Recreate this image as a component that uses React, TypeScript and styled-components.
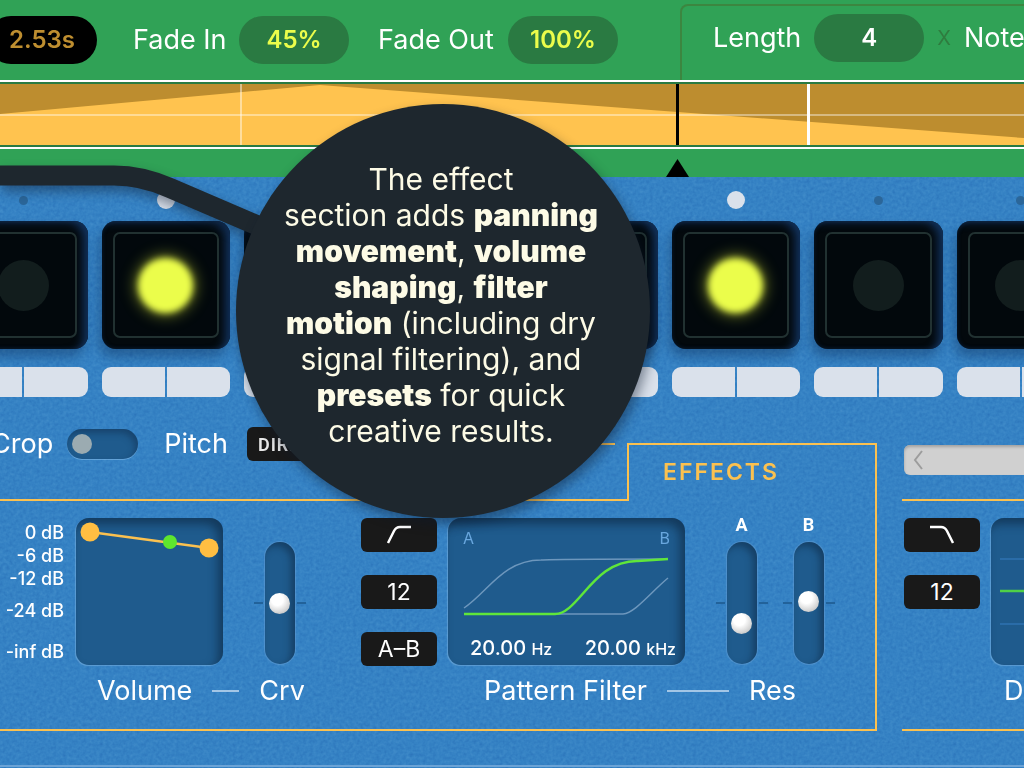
import React from "react";
import styled, { createGlobalStyle, css } from "styled-components";

const color = {
  blue: "#3582c4",
  well: "#1f5b8d",
  green: "#30a256",
  greenDark: "#2a7a42",
  gold: "#ffc34f",
  goldDark: "#bd8d2f",
  line: "#fbc150",
  ink: "#1e272e",
  cream: "#fdfbe6",
  key: "#dae1eb",
  lime: "#ebfd4b",
  black: "#191919",
};

const GlobalStyle = createGlobalStyle`
  *, *::before, *::after { box-sizing: border-box; }
  html, body { margin: 0; padding: 0; }
  body {
    background: ${color.blue};
    color: #fff;
    font-family: Inter, "Liberation Sans", sans-serif;
    overflow: hidden;
  }
  button, input { font: inherit; color: inherit; border: 0; padding: 0; margin: 0; }
`;

const Page = styled.main`
  position: relative;
  display: flex;
  flex-direction: column;
  min-height: 100vh;
  overflow: hidden;
`;

/* ---------- header ---------- */

const Header = styled.header`
  display: flex;
  background: ${color.green};
  padding-top: 4px;
`;

const FadeBar = styled.div`
  display: flex;
  align-items: center;
  flex: none;
  width: 680px;
  height: 76px;
  padding-bottom: 4px;
  margin-left: -13px;
  margin-right: 13px;
`;

const LengthBox = styled.div`
  display: flex;
  align-items: center;
  flex: 1;
  min-width: 0;
  height: 76px;
  gap: 13px;
  margin-right: -20px;
  padding: 0 0 10px 31px;
  border: 2px solid #3c8640;
  border-bottom: 0;
  border-radius: 8px 0 0 0;
`;

const Field = styled.div<{ $width: number; $before: number }>`
  display: flex;
  align-items: center;
  justify-content: space-between;
  flex: none;
  width: ${(p) => p.$width}px;
  margin-left: ${(p) => p.$before}px;
`;

const Caption = styled.label`
  font-size: 27px;
  line-height: 30px;
  white-space: nowrap;
`;

const Pill = styled.input<{ $tone: "lime" | "gold" | "white" }>`
  flex: none;
  width: 110px;
  height: 48px;
  padding-bottom: 1px;
  border-radius: 24px;
  text-align: center;
  font-size: 24px;
  font-weight: 600;
  outline: 0;
  background: ${color.greenDark};
  color: ${color.lime};
  ${(p) => p.$tone === "white" && css`color: #fff;`}
  ${(p) => p.$tone === "gold" && css`color: #be8e30; background: #000;`}
`;

const Times = styled.span`
  font-size: 20px;
  line-height: 24px;
  color: #2f7c3f;
`;

/* ---------- envelope timeline ---------- */

const Timeline = styled.section`
  background: ${color.green};
`;

const Envelope = styled.div`
  height: 69px;
  border: solid #fff;
  border-width: 2px 0;
  background: ${color.greenDark};
  padding: 2px 0;
  svg { display: block; width: 100%; height: 61px; }
`;

const MarkerStrip = styled.div`
  display: flex;
  align-items: flex-end;
  height: 28px;
  padding-left: 65%;
`;

const Marker = styled.svg`
  width: 24px;
  height: 18px;
`;

/* ---------- step sequencer ---------- */

const Deck = styled.div`
  position: relative;
  flex: 1;
  background: ${color.blue};
`;

const Grain = styled.svg`
  position: absolute;
  inset: 0;
  width: 100%;
  height: 100%;
  opacity: 0.3;
  mix-blend-mode: soft-light;
  pointer-events: none;
`;

const Steps = styled.section`
  display: grid;
  grid-template-columns: repeat(8, 1fr);
  gap: 14px;
  margin: 0 -61px 0 -41px;
  padding-top: 12px;
`;

const Step = styled.div`
  position: relative;
  display: flex;
  flex-direction: column;
`;

const DotRow = styled.div`
  display: flex;
  align-items: center;
  justify-content: center;
  height: 22px;
`;

const Dot = styled.span<{ $on: boolean }>`
  width: ${(p) => (p.$on ? 18 : 9)}px;
  height: ${(p) => (p.$on ? 18 : 9)}px;
  border-radius: 50%;
  background: ${(p) => (p.$on ? color.key : "#2b6699")};
`;

const Pad = styled.button`
  display: flex;
  height: 128px;
  margin-top: 10px;
  padding: 11px;
  border-radius: 14px;
  background: #03090d;
  box-shadow:
    inset -7px 3px 9px -2px #12315a,
    inset 0 0 4px #0a1c33,
    -3px 8px 12px rgba(10, 40, 80, 0.4);
`;

const PadFace = styled.span`
  display: flex;
  flex: 1;
  align-items: center;
  justify-content: center;
  border: 2px solid #213131;
  border-radius: 7px;
  background: #02080c;
`;

const Lamp = styled.span<{ $on: boolean }>`
  width: 51px;
  height: 51px;
  border-radius: 50%;
  background: #121d1d;
  ${(p) =>
    p.$on &&
    css`
      width: 55px;
      height: 55px;
      background: ${color.lime};
      filter: blur(3px);
      box-shadow: 0 0 14px 2px rgba(200, 215, 50, 0.6);
    `}
`;

const Keys = styled.div`
  display: grid;
  grid-template-columns: 1fr 1fr;
  gap: 2px;
  margin-top: 18px;
  border-radius: 9px;
  overflow: hidden;
`;

const Key = styled.button`
  height: 30px;
  background: ${color.key};
`;

/* ---------- lower panels ---------- */

const Panels = styled.div`
  position: relative;
  display: flex;
  gap: 25px;
  padding-top: 30px;
`;

const Effects = styled.section`
  flex: none;
  display: flex;
  flex-direction: column;
  width: 877px;
`;

const TabRow = styled.div`
  display: flex;
  margin-top: 16px;
  height: 58px;
`;

const Options = styled.div`
  flex: 1;
  display: flex;
  border-bottom: 2px solid ${color.line};
`;

const OptionGroup = styled.div`
  display: flex;
  align-items: center;
  height: 34px;
  margin-top: -16px;
  margin-left: -9px;
`;

const Toggle = styled.input`
  appearance: none;
  flex: none;
  width: 71px;
  height: 30px;
  padding: 5px;
  margin: 0 26px 0 14px;
  border-radius: 15px;
  background: ${color.well};
  box-shadow: inset -3px 4px 6px rgba(15, 45, 80, 0.5), 0 1px 0 rgba(130, 185, 230, 0.6);
  &::before {
    content: "";
    display: block;
    width: 20px;
    height: 20px;
    border-radius: 50%;
    background: #9babb1;
  }
`;

const BlackButton = styled.button`
  display: flex;
  align-items: center;
  justify-content: center;
  flex: none;
  width: 76px;
  height: 34px;
  border-radius: 6px;
  background: ${color.black};
  font-size: 23px;
  svg { display: block; }
`;

const DirectionButton = styled(BlackButton)`
  width: 108px;
  justify-content: flex-start;
  padding-left: 11px;
  margin-left: 19px;
  font-family: Roboto, "Liberation Sans", sans-serif;
  font-weight: 600;
  font-size: 18px;
  letter-spacing: 1px;
  color: #e8e8e8;
`;

const BackTab = styled.div`
  flex: 1;
  margin-right: 12px;
  border-top: 2px solid ${color.line};
`;

const Tab = styled.h2`
  width: 250px;
  margin: 0;
  padding: 13px 0 0 34px;
  border: 2px solid ${color.line};
  border-bottom: 0;
  color: ${color.line};
  font-size: 23px;
  line-height: 28px;
  font-weight: 600;
  letter-spacing: 2px;
`;

const Body = styled.div`
  display: flex;
  height: 230px;
  padding-top: 17px;
  border-right: 2px solid ${color.line};
  border-bottom: 2px solid ${color.line};
`;

const Module = styled.div<{ $width?: number; $before?: number }>`
  flex: none;
  width: ${(p) => (p.$width ? `${p.$width}px` : "auto")};
  margin-left: ${(p) => p.$before ?? 0}px;
`;

const Controls = styled.div`
  display: flex;
  align-items: flex-end;
  height: 147px;
`;

const CaptionRow = styled.div<{ $indent: number }>`
  display: flex;
  align-items: center;
  gap: 20px;
  margin-top: 11px;
  padding-left: ${(p) => p.$indent}px;
`;

const Dash = styled.span<{ $width: number }>`
  width: ${(p) => p.$width}px;
  height: 2px;
  background: #a3c6e6;
`;

const Scale = styled.div`
  display: grid;
  grid-template-rows: 22px 23px 23px 41px 41px;
  align-items: center;
  width: 64px;
  margin-right: 12px;
  align-self: flex-start;
  padding-top: 4px;
  text-align: right;
  font-size: 18px;
  line-height: 22px;
  font-weight: 500;
  white-space: nowrap;
`;

const Well = styled.div<{ $width: number }>`
  flex: none;
  width: ${(p) => p.$width}px;
  height: 147px;
  border-radius: 13px;
  background: ${color.well};
  box-shadow:
    inset -5px 6px 10px rgba(12, 36, 62, 0.6),
    -1px 1px 1px rgba(120, 175, 222, 0.6);
  svg { display: block; }
`;

const FilterWell = styled(Well)`
  display: flex;
  flex-direction: column;
  padding: 10px 9px 0 15px;
`;

const Ends = styled.div`
  display: flex;
  justify-content: space-between;
  padding-right: 6px;
  font-size: 16px;
  line-height: 20px;
  color: #69a7de;
`;

const Readout = styled.div`
  display: flex;
  justify-content: space-between;
  padding-left: 7px;
  font-size: 20px;
  line-height: 24px;
  font-weight: 500;
  white-space: nowrap;
  margin-top: 8px;
  small { font-size: 16px; }
`;

const Fader = styled.label<{ $before: number }>`
  display: flex;
  flex-direction: column;
  align-items: center;
  width: 53px;
  margin-left: ${(p) => p.$before}px;
  margin-bottom: 1px;
  font-family: Roboto, "Liberation Sans", sans-serif;
  font-size: 18px;
  line-height: 24px;
  font-weight: 700;
`;

const FaderTrack = styled.span`
  display: flex;
  align-items: center;
  gap: 2px;
  margin-top: 5px;
  &::before, &::after {
    content: "";
    width: 9px;
    height: 2px;
    background: #22629a;
  }
`;

const Range = styled.input`
  appearance: none;
  writing-mode: vertical-lr;
  direction: rtl;
  width: 30px;
  height: 122px;
  padding: 5px 0;
  border-radius: 15px;
  background: ${color.well};
  box-shadow:
    inset -4px 4px 7px rgba(12, 36, 62, 0.5),
    0 0 1px 1px rgba(110, 165, 214, 0.45);
  &::-webkit-slider-thumb {
    appearance: none;
    width: 21px;
    height: 21px;
    border-radius: 50%;
    background: radial-gradient(circle at 40% 32%, #fff 30%, #d4d4d4 68%, #a9a9a9 100%);
  }
`;

const ButtonStack = styled.div`
  display: flex;
  flex-direction: column;
  gap: 23px;
  height: 147px;
  margin-right: 11px;
`;

const DryPanel = styled.section`
  flex: 1;
  min-width: 0;
  overflow: hidden;
  padding-top: 18px;
`;

const PresetBar = styled.div`
  display: flex;
  align-items: center;
  height: 30px;
  margin: 0 -20px 0 2px;
  border-radius: 6px;
  background: #d0d0d0;
  box-shadow: inset 0 2px 3px #a2a2a2;
`;

const PrevButton = styled.button`
  display: flex;
  align-items: center;
  justify-content: center;
  width: 28px;
  height: 30px;
  background: none;
`;

const DryBody = styled.div`
  display: flex;
  height: 232px;
  margin-top: 24px;
  padding: 17px 0 0 2px;
  border: solid ${color.line};
  border-width: 2px 0;
`;

const BottomEdge = styled.div`
  position: relative;
  height: 2px;
  margin-top: 34px;
  background: #6ba3d6;
`;

/* ---------- callout ---------- */

const Tail = styled.svg`
  position: absolute;
  left: 0;
  top: 150px;
  width: 290px;
  height: 100px;
  filter: drop-shadow(2px 6px 6px rgba(10, 25, 45, 0.45));
`;

const Callout = styled.aside`
  position: absolute;
  left: 236px;
  top: 104px;
  display: flex;
  align-items: center;
  justify-content: center;
  width: 414px;
  height: 414px;
  padding-bottom: 13px;
  padding-right: 4px;
  border-radius: 50%;
  background: ${color.ink};
  box-shadow: 3px 6px 12px rgba(10, 25, 45, 0.45);
  p {
    margin: 0;
    text-align: center;
    color: ${color.cream};
    font-size: 30px;
    line-height: 36px;
    white-space: nowrap;
  }
  b { font-weight: 900; }
`;

const stepsOn = [false, true, false, false, false, true, false, false];

function FaderControl({ name, label, value, before }: { name: string; label?: string; value: number; before: number }) {
  return (
    <Fader $before={before}>
      {label}
      <FaderTrack>
        <Range type="range" aria-label={name} defaultValue={value} />
      </FaderTrack>
    </Fader>
  );
}

export default function App() {
  return (
    <>
      <GlobalStyle />
      <Page>
        <Header>
          <FadeBar>
            <Pill $tone="gold" aria-label="Time" defaultValue="2.53s" />
            <Field $width={216} $before={36}>
              <Caption htmlFor="fade-in">Fade In</Caption>
              <Pill id="fade-in" $tone="lime" defaultValue="45%" />
            </Field>
            <Field $width={240} $before={29}>
              <Caption htmlFor="fade-out">Fade Out</Caption>
              <Pill id="fade-out" $tone="lime" defaultValue="100%" />
            </Field>
          </FadeBar>
          <LengthBox>
            <Caption htmlFor="length">Length</Caption>
            <Pill id="length" $tone="white" defaultValue="4" />
            <Times>X</Times>
            <Caption as="span">Note</Caption>
          </LengthBox>
        </Header>

        <Timeline>
          <Envelope>
            <svg viewBox="0 0 1024 61" preserveAspectRatio="none">
              <rect width="1024" height="61" fill={color.goldDark} />
              <path d="M0 30 L320 1 L1024 54 V61 H0 Z" fill={color.gold} />
              <path d="M0 31 H1024" stroke="#fff" strokeOpacity="0.4" strokeWidth="2" />
              <path d="M241 0 V61" stroke="#fff" strokeOpacity="0.45" strokeWidth="2" />
              <path d="M677.500 0 V61" stroke="#000" strokeWidth="3" />
              <path d="M808.500 0 V61" stroke="#fff" strokeWidth="3" />
            </svg>
          </Envelope>
          <MarkerStrip>
            <Marker viewBox="0 0 24 18">
              <path d="M11.500 0 L23 18 H0 Z" fill="#000" />
            </Marker>
          </MarkerStrip>
        </Timeline>

        <Deck>
          <Grain aria-hidden="true">
            <filter id="grain" colorInterpolationFilters="sRGB">
              <feTurbulence type="fractalNoise" baseFrequency="0.3" numOctaves="2" />
              <feColorMatrix type="saturate" values="0" />
              <feComponentTransfer>
                <feFuncA type="linear" slope="0" intercept="1" />
              </feComponentTransfer>
            </filter>
            <rect width="100%" height="100%" filter="url(#grain)" />
          </Grain>

          <Steps>
            {stepsOn.map((on, i) => (
              <Step key={i}>
                <DotRow>
                  <Dot $on={on} />
                </DotRow>
                <Pad aria-label={`Step ${i + 1}`}>
                  <PadFace>
                    <Lamp $on={on} />
                  </PadFace>
                </Pad>
                <Keys>
                  <Key aria-label={`Step ${i + 1} first half`} />
                  <Key aria-label={`Step ${i + 1} second half`} />
                </Keys>
              </Step>
            ))}
          </Steps>

          <Panels>
            <Effects>
              <TabRow>
                <Options>
                  <OptionGroup>
                    <Caption htmlFor="crop">Crop</Caption>
                    <Toggle id="crop" type="checkbox" />
                    <Caption htmlFor="pitch">Pitch</Caption>
                    <DirectionButton id="pitch">DIRECT</DirectionButton>
                  </OptionGroup>
                  <BackTab />
                </Options>
                <Tab>EFFECTS</Tab>
              </TabRow>
              <Body>
                <Module $width={309}>
                  <Controls>
                    <Scale>
                      <span>0 dB</span>
                      <span>-6 dB</span>
                      <span>-12 dB</span>
                      <span>-24 dB</span>
                      <span>-inf dB</span>
                    </Scale>
                    <Well $width={147}>
                      <svg width="147" height="147" viewBox="0 0 147 147">
                        <path d="M14 14 L133 30" stroke={color.line} strokeWidth="2.500" />
                        <circle cx="14" cy="14" r="9.500" fill="#ffbe42" />
                        <circle cx="94" cy="24" r="7" fill="#5ee62e" />
                        <circle cx="133" cy="30" r="9.500" fill="#ffbe42" />
                      </svg>
                    </Well>
                    <FaderControl name="Curve" value={49} before={30} />
                  </Controls>
                  <CaptionRow $indent={97}>
                    <Caption as="span">Volume</Caption>
                    <Dash $width={27} />
                    <Caption as="span">Crv</Caption>
                  </CaptionRow>
                </Module>

                <Module $before={52}>
                  <Controls>
                    <ButtonStack>
                      <BlackButton aria-label="High-pass filter">
                        <svg width="26" height="20" viewBox="0 0 26 20" fill="none" stroke="#fff" strokeWidth="2.500">
                          <path d="M2 18 L8 6 Q10 2 14 2 H25" />
                        </svg>
                      </BlackButton>
                      <BlackButton>12</BlackButton>
                      <BlackButton>A–B</BlackButton>
                    </ButtonStack>
                    <FilterWell $width={237}>
                      <Ends>
                        <span>A</span>
                        <span>B</span>
                      </Ends>
                      <svg width="207" height="80" viewBox="0 0 207 80" fill="none">
                        <path d="M1 60 C25 44 40 12 78 12 Q90 11 205 11" stroke="#6d97bd" strokeWidth="1.500" />
                        <path d="M92 66 H160 C172 65 188 44 205 30" stroke="#6d97bd" strokeWidth="1.500" />
                        <path d="M1 66 H92 C116 66 130 12 175 13 Q190 12 205 11" stroke="#5fe63a" strokeWidth="2.500" />
                      </svg>
                      <Readout>
                        <span>20.00 <small>Hz</small></span>
                        <span>20.00 <small>kHz</small></span>
                      </Readout>
                    </FilterWell>
                    <FaderControl name="Resonance A" label="A" value={27} before={30} />
                    <FaderControl name="Resonance B" label="B" value={52} before={14} />
                  </Controls>
                  <CaptionRow $indent={123}>
                    <Caption as="span">Pattern Filter</Caption>
                    <Dash $width={62} />
                    <Caption as="span">Res</Caption>
                  </CaptionRow>
                </Module>
              </Body>
            </Effects>

            <DryPanel>
              <PresetBar>
                <PrevButton aria-label="Previous preset">
                  <svg width="12" height="20" viewBox="0 0 12 20" fill="none" stroke="#9c9c9c" strokeWidth="2">
                    <path d="M10 1 L3 10 L10 19" />
                  </svg>
                </PrevButton>
              </PresetBar>
              <DryBody>
                <Module>
                  <Controls>
                    <ButtonStack>
                      <BlackButton aria-label="Low-pass filter">
                        <svg width="26" height="20" viewBox="0 0 26 20" fill="none" stroke="#fff" strokeWidth="2.500">
                          <path d="M1 2 H12 Q16 2 18 6 L24 18" />
                        </svg>
                      </BlackButton>
                      <BlackButton>12</BlackButton>
                    </ButtonStack>
                    <Well $width={237}>
                      <svg width="237" height="147" viewBox="0 0 237 147">
                        <path d="M9 41 H228 M9 106 H228" stroke="#2a6ca8" strokeWidth="2" />
                        <path d="M9 73 H228" stroke="#4fd046" strokeWidth="2.500" />
                      </svg>
                    </Well>
                  </Controls>
                  <CaptionRow $indent={100}>
                    <Caption as="span">Dry Filter</Caption>
                  </CaptionRow>
                </Module>
              </DryBody>
            </DryPanel>
          </Panels>
          <BottomEdge />
        </Deck>

        <Tail viewBox="0 0 290 100" fill="none" aria-hidden="true">
          <path d="M-10 25.500 H114 C136 25.500 152 30 170 38 L275 83" stroke={color.ink} strokeWidth="20" />
        </Tail>
        <Callout>
          <p>
            The effect
            <br />
            section adds <b>panning</b>
            <br />
            <b>movement</b>, <b>volume</b>
            <br />
            <b>shaping</b>, <b>filter</b>
            <br />
            <b>motion</b> (including dry
            <br />
            signal filtering), and
            <br />
            <b>presets</b> for quick
            <br />
            creative results.
          </p>
        </Callout>
      </Page>
    </>
  );
}
